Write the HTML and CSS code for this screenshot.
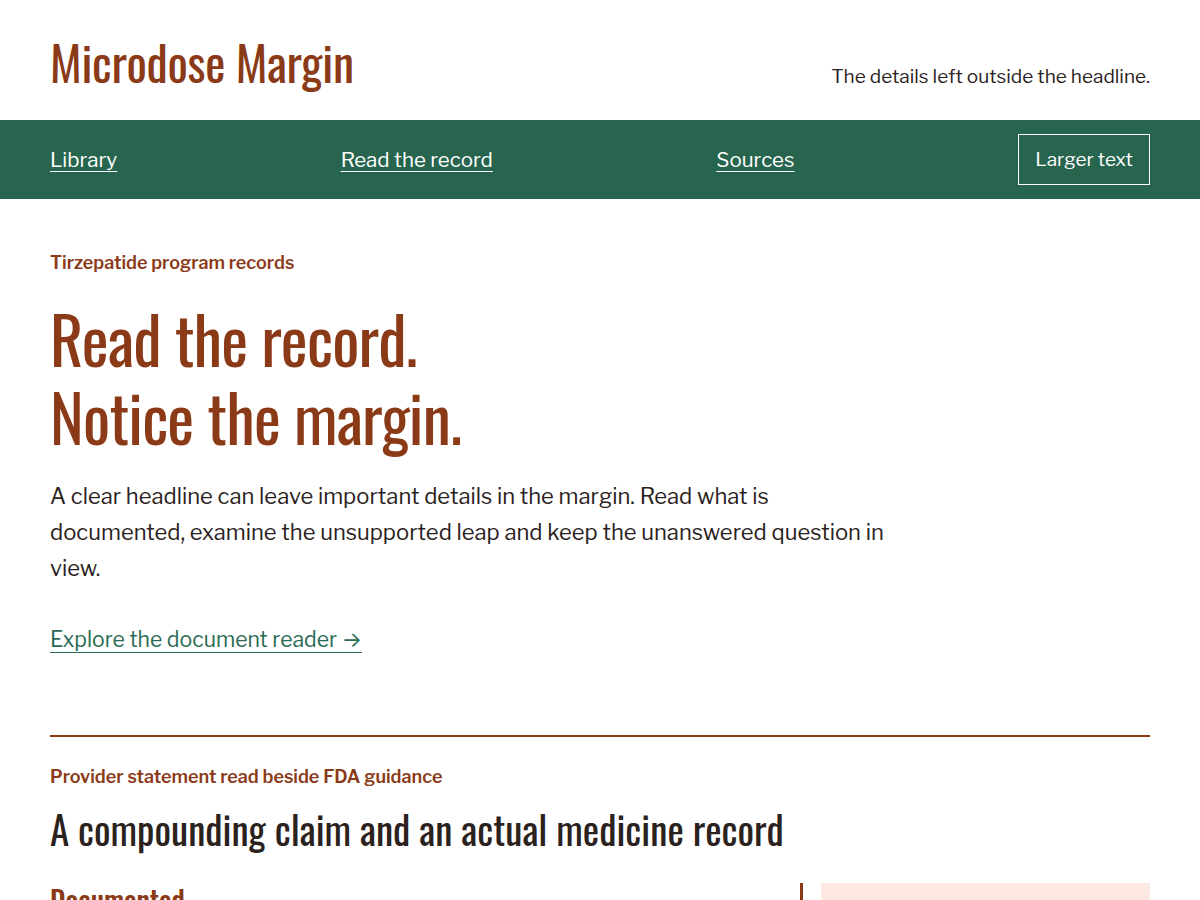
FILE: index.html
```html
<!DOCTYPE html>
<html lang="en">
<head>
    <meta charset="UTF-8">
    <meta name="viewport" content="width=device-width, initial-scale=1.0">
    <title>Microdose Margin</title>
    <link rel="stylesheet" href="styles.css">
</head>
<body>
    <header class="site-header">
        <div class="wrap header-row">
            <a class="site-title" href="#">Microdose Margin</a>
            <p class="tagline">The details left outside the headline.</p>
        </div>
    </header>

    <nav class="site-nav">
        <div class="wrap nav-row">
            <a href="#">Library</a>
            <a href="#">Read the record</a>
            <a href="#">Sources</a>
            <button class="text-toggle" type="button">Larger text</button>
        </div>
    </nav>

    <main class="wrap">
        <!-- intro -->
        <section class="hero">
            <p class="eyebrow">Tirzepatide program records</p>
            <h1>Read the record.<br>Notice the margin.</h1>
            <p class="lede">A clear headline can leave important details in the margin. Read what is documented, examine the unsupported leap and keep the unanswered question in view.</p>
            <a class="cta" href="#">Explore the document reader &rarr;</a>
        </section>

        <!-- first record -->
        <section class="record">
            <p class="eyebrow">Provider statement read beside FDA guidance</p>
            <h2>A compounding claim and an actual medicine record</h2>
            <div class="record-grid">
                <div class="record-main">
                    <h3>Documented</h3>
                </div>
                <aside class="record-side">
                    <div class="margin-note"></div>
                </aside>
            </div>
        </section>
    </main>
</body>
</html>
```

FILE: styles.css
```css
* {
    margin: 0;
    padding: 0;
    box-sizing: border-box;
}
body {
    font-family: "Libre Franklin", "Inter", "Liberation Sans", sans-serif;
    color: #2b221e;
    background: #fff;
}
.wrap {
    max-width: 1200px;
    padding: 0 50px;
}

/* header */
.site-header {
    height: 120px;
}
.header-row {
    display: flex;
    justify-content: space-between;
    align-items: baseline;
    padding-top: 32px;
}
.site-title {
    font-family: "Oswald", "Noto Sans", sans-serif;
    font-stretch: extra-condensed;
    font-weight: 400;
    font-size: 48px;
    line-height: 60px;
    letter-spacing: -0.3px;
    color: #8b3a17;
    text-decoration: none;
}
.tagline {
    font-size: 19px;
    color: #2b221e;
}

/* nav */
.site-nav {
    background: #28654f;
    height: 79px;
}
.nav-row {
    display: flex;
    justify-content: space-between;
    align-items: center;
    height: 79px;
}
.nav-row a {
    color: #fff;
    font-size: 20.5px;
    text-decoration: underline;
    text-underline-offset: 4px;
    text-decoration-thickness: 1px;
}
.text-toggle {
    background: transparent;
    border: 1px solid #fff;
    color: #fff;
    font-family: inherit;
    font-size: 19px;
    width: 132px;
    height: 51px;
    cursor: pointer;
}

/* hero */
.hero {
    padding-top: 52px;
    padding-bottom: 81px;
}
.eyebrow {
    font-size: 18px;
    font-weight: 600;
    color: #8b3a17;
    line-height: 24px;
}
.hero h1 {
    font-family: "Oswald", "Noto Sans", sans-serif;
    font-stretch: extra-condensed;
    font-weight: 400;
    font-size: 64px;
    line-height: 78px;
    letter-spacing: -0.8px;
    color: #8b3a17;
    margin-top: 24px;
}
.lede {
    font-size: 22px;
    line-height: 36px;
    max-width: 838px;
    margin-top: 23px;
}
.cta {
    display: inline-block;
    margin-top: 40px;
    font-size: 21.2px;
    line-height: 28px;
    color: #2a6b55;
    text-decoration: underline;
    text-underline-offset: 5px;
    text-decoration-thickness: 1px;
}

/* records */
.record {
    border-top: 2px solid #8b3a17;
    padding-top: 28px;
}
.record h2 {
    font-family: "Oswald", "Noto Sans", sans-serif;
    font-stretch: extra-condensed;
    font-weight: 400;
    font-size: 39px;
    line-height: 52px;
    color: #2b221e;
    margin-top: 13px;
}
.record-grid {
    display: grid;
    grid-template-columns: 1fr 350px;
    gap: 20px;
    margin-top: 29px;
}
.record-main h3 {
    font-family: "Oswald", "Noto Sans", sans-serif;
    font-stretch: extra-condensed;
    font-weight: 500;
    font-size: 28px;
    line-height: 34px;
    color: #8b3a17;
}
.record-side {
    border-left: 3px solid #8b3a17;
    padding-left: 18px;
}
.margin-note {
    background: #fde9e1;
    height: 200px;
}
```
